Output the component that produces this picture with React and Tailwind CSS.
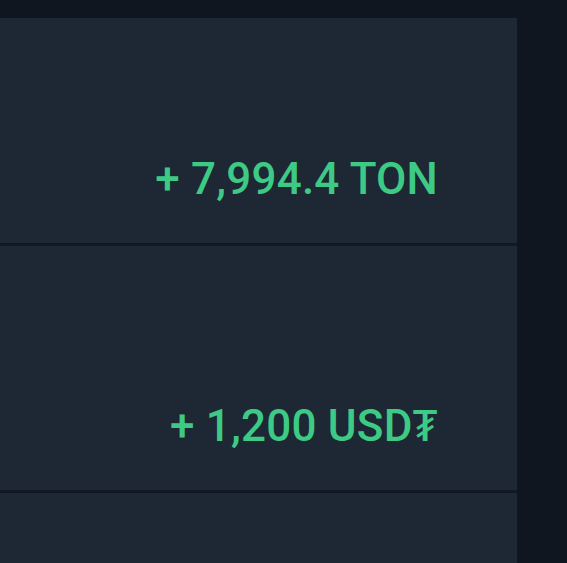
import React from "react";

const rows = [
  { amount: "+ 7,994.4 TON", first: true },
  { amount: "+ 1,200 USD₮" },
  { amount: "" },
];

export default function App() {
  return (
    <div
      className="w-full h-screen overflow-hidden bg-[#0f1620] flex flex-col"
      style={{ fontFamily: "Roboto, 'Noto Sans', 'DejaVu Sans', sans-serif" }}
    >
      <div className="h-[18px] shrink-0 bg-[#0f1620]" />
      <div className="w-[517px] flex flex-col">
        {rows.map((r, i) => (
          <div
            key={i}
            className={`bg-[#1e2734] border-b-[3px] border-[#111822] flex justify-end pr-[79px] ${
              r.first ? "h-[228px] pt-[139px]" : "h-[247px] pt-[158px]"
            }`}
          >
            {r.amount && (
              <span className="text-[44px] leading-none font-medium text-[#3dca85] tracking-[0.2px]">
                {r.amount}
              </span>
            )}
          </div>
        ))}
      </div>
    </div>
  );
}
